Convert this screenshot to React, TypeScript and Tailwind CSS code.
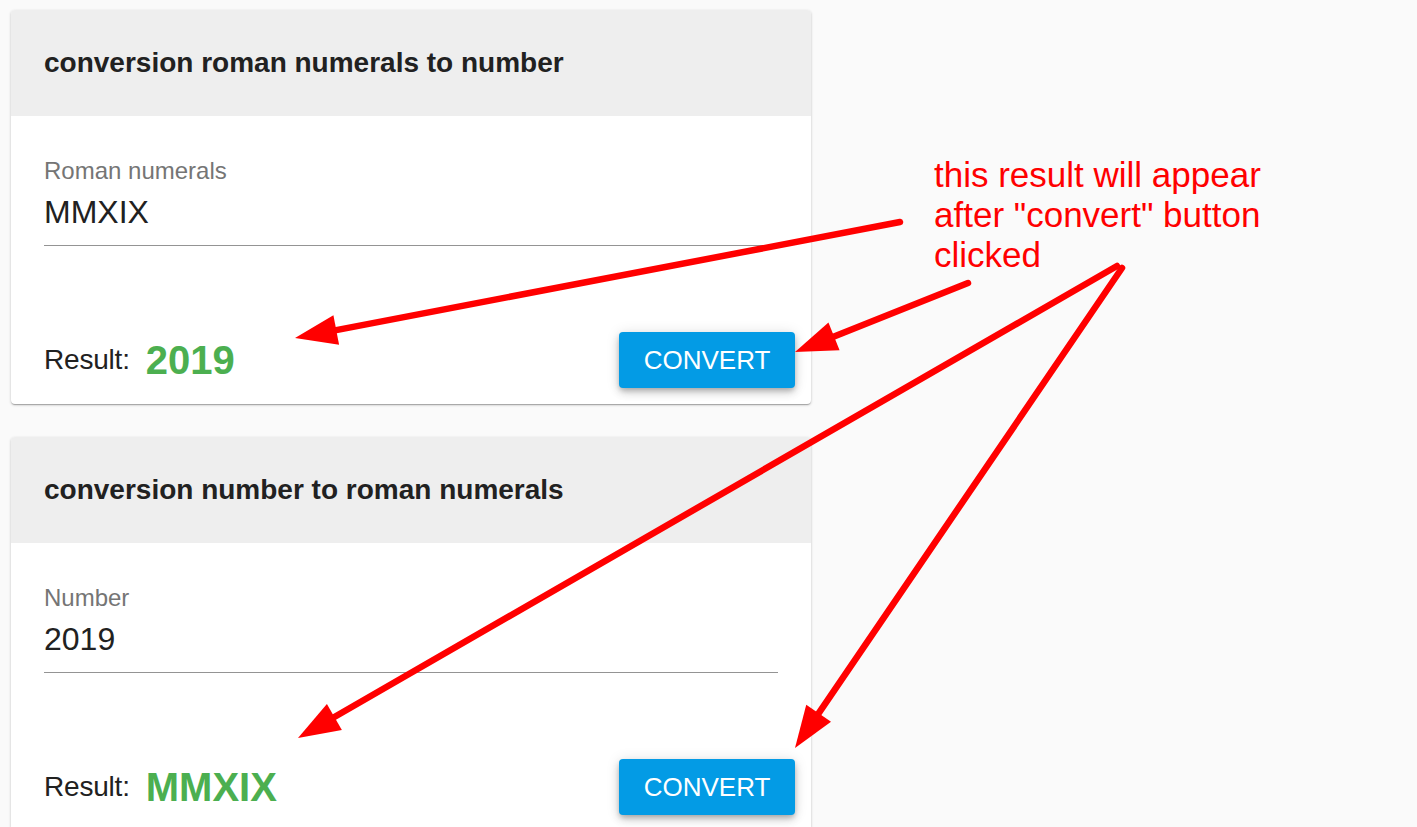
import type { FC } from 'react';

type ConverterCardProps = {
  title: string;
  label: string;
  value: string;
  result: string;
};

const ConverterCard: FC<ConverterCardProps> = ({ title, label, value, result }) => (
  <div className="w-[800px] shrink-0 overflow-hidden rounded bg-white shadow-[0_1px_3px_rgba(0,0,0,0.2),0_1px_1px_rgba(0,0,0,0.14),0_2px_1px_-1px_rgba(0,0,0,0.12)]">
    <div className="flex h-[106px] items-center bg-[#eeeeee] px-[33px]">
      <h2 className="text-[28px] font-bold text-[#212121]">{title}</h2>
    </div>
    <div className="pl-[33px] pr-[16px] pt-[41px] pb-[16px]">
      <div className="text-[24px] leading-[28px] text-[#757575]">{label}</div>
      <div className="mr-[17px] mt-[9px] border-b border-[#949494] pb-[15px] text-[32px] leading-[36px] text-[#212121]">
        {value}
      </div>
      <div className="mt-[86px] flex h-[56px] items-center justify-between">
        <div className="flex items-center gap-[16px]">
          <span className="text-[28px] tracking-[-0.2px] text-[#212121]">Result:</span>
          <span className="text-[40px] font-bold leading-none text-[#4caf50]">{result}</span>
        </div>
        <button className="h-[56px] w-[176px] rounded bg-[#039be5] text-[26px] text-white shadow-[0_3px_5px_-1px_rgba(0,0,0,0.2),0_5px_8px_rgba(0,0,0,0.14),0_1px_14px_rgba(0,0,0,0.12)]">
          CONVERT
        </button>
      </div>
    </div>
  </div>
);

type Arrow = { x1: number; y1: number; x2: number; y2: number };

const arrows: Arrow[] = [
  { x1: 900, y1: 222, x2: 295, y2: 338 },
  { x1: 968, y1: 283, x2: 795, y2: 352 },
  { x1: 1117, y1: 266, x2: 298, y2: 738 },
  { x1: 1122, y1: 268, x2: 795, y2: 748 },
];

// line plus triangle head, head sits at (x2, y2)
const ArrowShape: FC<Arrow> = ({ x1, y1, x2, y2 }) => {
  const dx = x2 - x1;
  const dy = y2 - y1;
  const len = Math.hypot(dx, dy);
  const ux = dx / len;
  const uy = dy / len;
  const bx = x2 - ux * 42;
  const by = y2 - uy * 42;
  const px = uy * 15;
  const py = -ux * 15;
  const head = `${x2},${y2} ${bx + px},${by + py} ${bx - px},${by - py}`;
  return (
    <g>
      <line x1={x1} y1={y1} x2={bx + ux * 4} y2={by + uy * 4} stroke="#ff0000" strokeWidth={6.5} strokeLinecap="round" />
      <polygon points={head} fill="#ff0000" />
    </g>
  );
};

const App: FC = () => (
  <div className="relative h-[827px] overflow-hidden bg-[#fafafa] font-['Liberation_Sans',Arial,sans-serif]">
    <div className="flex pl-[11px] pt-[10px]">
      <div className="flex flex-col gap-[33px]">
        <ConverterCard
          title="conversion roman numerals to number"
          label="Roman numerals"
          value="MMXIX"
          result="2019"
        />
        <ConverterCard
          title="conversion number to roman numerals"
          label="Number"
          value="2019"
          result="MMXIX"
        />
      </div>
      <div className="ml-[123px] mt-[145px] text-[35px] leading-[40px] text-[#ff0000]">
        this result will appear
        <br />
        after "convert" button
        <br />
        clicked
      </div>
    </div>
    <svg className="pointer-events-none absolute inset-0" width="1417" height="827">
      {arrows.map((a, i) => (
        <ArrowShape key={i} {...a} />
      ))}
    </svg>
  </div>
);

export default App;
